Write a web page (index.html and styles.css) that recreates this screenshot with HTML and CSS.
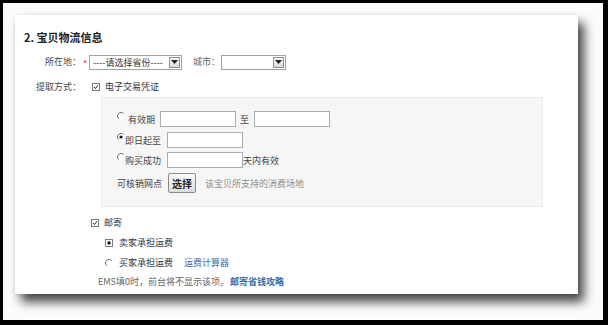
FILE: index.html
```html
<!DOCTYPE html>
<html lang="zh">
<head>
<meta charset="utf-8">
<title>宝贝物流信息</title>
<link rel="stylesheet" href="styles.css">
</head>
<body>
<div class="frame">
  <div class="card">
    <h2 class="title">2. 宝贝物流信息</h2>

    <div class="row row-loc">
      <span class="label">所在地：</span>
      <span class="req">*</span>
      <div class="select sel-prov"><span class="sel-text">----请选择省份----</span><span class="sel-btn"><svg width="7" height="4" viewBox="0 0 7 4"><path d="M0 0H7L3.5 4Z" fill="#222"/></svg></span></div>
      <span class="city-label">城市：</span>
      <div class="select sel-city"><span class="sel-text"></span><span class="sel-btn"><svg width="7" height="4" viewBox="0 0 7 4"><path d="M0 0H7L3.5 4Z" fill="#222"/></svg></span></div>
    </div>

    <div class="row row-method">
      <span class="label">提取方式：</span>
      <span class="check"><svg width="8" height="8" viewBox="0 0 8 8"><rect x="0.5" y="0.5" width="7" height="7" fill="#fff" stroke="#7a7a7a"/><path d="M2 4L3.4 5.6L6 2.2" fill="none" stroke="#222" stroke-width="1"/></svg></span>
      <span class="txt">电子交易凭证</span>
    </div>

    <div class="voucher">
      <div class="vrow">
        <span class="radio"><svg width="8" height="8" viewBox="0 0 8 8"><circle cx="4" cy="4" r="3.5" fill="#fff"/><path d="M6.6 1.5A3.5 3.5 0 0 0 1.5 6.5" fill="none" stroke="#6f6f6f" stroke-width="1"/></svg></span>
        <span class="vlabel vl1">有效期</span>
        <span class="input w76"></span>
        <span class="to">至</span>
        <span class="input w76"></span>
      </div>
      <div class="vrow r2">
        <span class="radio"><svg width="8" height="8" viewBox="0 0 8 8"><circle cx="4" cy="4" r="3.5" fill="#fff"/><path d="M6.6 1.5A3.5 3.5 0 0 0 1.5 6.5" fill="none" stroke="#6f6f6f" stroke-width="1"/><circle cx="4" cy="4" r="1.6" fill="#111"/></svg></span>
        <span class="vlabel vl2">即日起至</span>
        <span class="input w76"></span>
      </div>
      <div class="vrow r3">
        <span class="radio"><svg width="8" height="8" viewBox="0 0 8 8"><circle cx="4" cy="4" r="3.5" fill="#fff"/><path d="M6.6 1.5A3.5 3.5 0 0 0 1.5 6.5" fill="none" stroke="#6f6f6f" stroke-width="1"/></svg></span>
        <span class="vlabel vl2">购买成功</span>
        <span class="input w76"></span>
        <span class="after">天内有效</span>
      </div>
      <div class="vrow r4">
        <span class="vlabel vl4">可核销网点</span>
        <span class="btn">选择</span>
        <span class="hint">该宝贝所支持的消费场地</span>
      </div>
    </div>

    <div class="row row-post">
      <span class="check"><svg width="8" height="8" viewBox="0 0 8 8"><rect x="0.5" y="0.5" width="7" height="7" fill="#fff" stroke="#7a7a7a"/><path d="M2 4L3.4 5.6L6 2.2" fill="none" stroke="#222" stroke-width="1"/></svg></span>
      <span class="txt">邮寄</span>
    </div>
    <div class="row row-fee r-seller">
      <span class="radio"><svg width="8" height="8" viewBox="0 0 8 8"><rect x="0.5" y="0.5" width="7" height="7" fill="#fff" stroke="#7a7a7a"/><circle cx="4" cy="4" r="1.7" fill="#111"/></svg></span>
      <span class="txt">卖家承担运费</span>
    </div>
    <div class="row row-fee r-buyer">
      <span class="radio"><svg width="8" height="8" viewBox="0 0 8 8"><circle cx="4" cy="4" r="3.5" fill="#fff"/><path d="M6.6 1.5A3.5 3.5 0 0 0 1.5 6.5" fill="none" stroke="#6f6f6f" stroke-width="1"/></svg></span>
      <span class="txt">买家承担运费</span>
      <a class="link calc" href="#">运费计算器</a>
    </div>
    <div class="row row-ems">
      <span class="note">EMS填0时，前台将不显示该项。</span><a class="link strong" href="#">邮寄省钱攻略</a>
    </div>
  </div>
</div>
</body>
</html>
```

FILE: styles.css
```css
* { box-sizing: border-box; }
html, body { margin: 0; padding: 0; }
body {
  background: #000;
  width: 608px;
  height: 325px;
  overflow: hidden;
  font-family: "Noto Sans CJK SC", "Noto Sans", "Liberation Sans", sans-serif;
  font-size: 9px;
  color: #333;
}
.frame {
  margin: 3px 5px 0 3px;
  height: 317px;
  background: #fcfcfc;
  padding: 12px;
}
.card {
  width: 563px;
  height: 279px;
  background: #fff;
  box-shadow: 6px 8px 10px rgba(0, 0, 0, 0.72), 0 0 4px rgba(0, 0, 0, 0.08);
  padding: 15px 0 0 9px;
  display: flex;
  flex-direction: column;
}
.title {
  margin: 0;
  height: 14px;
  line-height: 14px;
  font-size: 11px;
  font-weight: bold;
  color: #222;
}
.row {
  display: flex;
  align-items: center;
  height: 16px;
  line-height: 16px;
  white-space: nowrap;
}
.label {
  width: 57px;
  text-align: right;
  color: #444;
}
.row-loc { margin-top: 10px; }
.req {
  color: #e33;
  width: 5px;
  margin-left: 2px;
  font-size: 9px;
  line-height: 9px;
  padding-top: 3px;
}
.select {
  display: flex;
  align-items: center;
  height: 15px;
  border: 1px solid #9ea3a8;
  background: #fff;
  margin-left: 1px;
}
.sel-prov { width: 93px; }
.sel-city { width: 65px; margin-left: 1px; }
.sel-text {
  flex: 1;
  padding-left: 3px;
  color: #333;
  line-height: 13px;
}
.sel-btn {
  width: 11px;
  height: 11px;
  margin-right: 1px;
  border: 1px solid #8d8d8d;
  background: linear-gradient(#f6f6f6, #dcdcdc);
  display: flex;
  align-items: center;
  justify-content: center;
}
.city-label {
  margin-left: 11px;
  width: 27px;
  color: #666;
}
.row-method { margin-top: 9px; }
.check { display: flex; margin-left: 11px; }
.check svg, .radio svg { display: block; }
.txt { margin-left: 5px; color: #333; }

.voucher {
  margin: 2px 0 0 77px;
  width: 442px;
  height: 110px;
  background: #f6f6f6;
  border: 1px solid #ececec;
  padding: 13px 0 0 15px;
  display: flex;
  flex-direction: column;
}
.vrow {
  display: flex;
  align-items: center;
  height: 16px;
  white-space: nowrap;
}
.vrow .radio { display: flex; align-self: flex-start; margin-top: 1px; }
.vrow.r2 { margin-top: 5px; }
.vrow.r3 { margin-top: 4px; }
.vrow.r4 { margin-top: 5px; height: 20px; }
.vlabel { color: #444; }
.vl1 { width: 35px; padding-left: 3px; }
.vl2 { width: 42px; padding-left: 0; }
.vl4 { width: 51px; }
.input {
  display: block;
  height: 16px;
  background: #fff;
  border: 1px solid #a8adb3;
}
.w76 { width: 76px; }
.to { margin: 0 5px 0 4px; color: #444; }
.after { color: #444; }
.btn {
  display: flex;
  align-items: center;
  justify-content: center;
  width: 28px;
  height: 20px;
  border: 1px solid #8a8a8a;
  border-radius: 2px;
  background: linear-gradient(#fafafa, #dedede);
  font-size: 10px;
  color: #222;
  font-weight: bold;
}
.hint { margin-left: 9px; color: #8d8d8d; }

.row-post { margin-top: 9px; height: 14px; }
.row-post .check { margin-left: 67px; }
.row-fee { height: 14px; margin-top: 6px; }
.row-fee .radio { display: flex; margin-left: 81px; }
.row-fee .txt { margin-left: 6px; }
.link { color: #3b6aa8; text-decoration: none; }
.calc { margin-left: 11px; }
.row-ems { margin-top: 5px; height: 14px; padding-left: 74px; }
.note { color: #666; }
.strong { font-weight: bold; margin-left: 1px; }
```
